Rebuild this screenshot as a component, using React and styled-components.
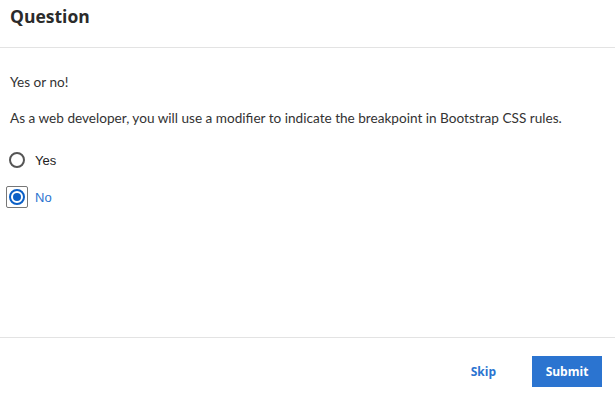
import React, { useState } from "react";
import styled, { createGlobalStyle } from "styled-components";

const Global = createGlobalStyle`
  html, body { margin: 0; padding: 0; background: #fff; }
  body { font-family: Lato, "Noto Sans", sans-serif; }
`;

const Page = styled.div`
  width: 615px;
  height: 404px;
  display: flex;
  flex-direction: column;
  box-sizing: border-box;
`;

const Header = styled.header`
  height: 48px;
  box-sizing: border-box;
  border-bottom: 1px solid #e3e3e3;
  padding: 5px 10px 0;
`;

const Title = styled.h1`
  margin: 0;
  font-family: "Open Sans", sans-serif;
  font-weight: 700;
  font-size: 17.5px;
  line-height: 22px;
  color: #2b2b2b;
`;

const Body = styled.main`
  flex: 1;
  padding: 25px 10px 0;
  border-bottom: 1px solid #e3e3e3;
`;

const Para = styled.p`
  margin: 0 0 18px;
  font-size: 13.6px;
  line-height: 18px;
  color: #333;
`;

const Options = styled.div`
  display: flex;
  flex-direction: column;
  gap: 15px;
  margin-top: 22px;
`;

const Option = styled.label`
  display: flex;
  align-items: center;
  gap: 7px;
  font-family: "Liberation Sans", Arial, sans-serif;
  font-size: 13px;
  color: ${(p) => (p.$checked ? "#2b74d0" : "#222")};
  cursor: pointer;
`;

const RadioWrap = styled.span`
  width: 22px;
  height: 22px;
  display: flex;
  align-items: center;
  justify-content: center;
  box-sizing: border-box;
  margin-left: -4px;
  border-radius: 2px;
  border: 1.5px solid ${(p) => (p.$focus ? "#777" : "transparent")};
`;

const Radio = styled.span`
  width: 16px;
  height: 16px;
  border-radius: 50%;
  box-sizing: border-box;
  border: 2px solid ${(p) => (p.$checked ? "#0b5fc6" : "#555")};
  display: flex;
  align-items: center;
  justify-content: center;
  &::after {
    content: "";
    width: 8px;
    height: 8px;
    border-radius: 50%;
    background: ${(p) => (p.$checked ? "#0b5fc6" : "transparent")};
  }
`;

const Footer = styled.footer`
  height: 66px;
  display: flex;
  align-items: center;
  justify-content: flex-end;
  padding: 0 13px 0 0;
  gap: 36px;
  box-sizing: border-box;
`;

const LinkButton = styled.button`
  border: none;
  background: none;
  font-family: "Open Sans", sans-serif;
  font-weight: 700;
  font-size: 12px;
  color: #2b74d0;
  padding: 0;
  cursor: pointer;
`;

const PrimaryButton = styled.button`
  width: 70px;
  height: 31px;
  border: none;
  background: #2b74d0;
  color: #fff;
  font-family: "Open Sans", sans-serif;
  font-weight: 700;
  font-size: 12px;
  padding: 0;
  cursor: pointer;
`;

export default function App() {
  const [value, setValue] = useState("no");
  const options = [
    { id: "yes", label: "Yes" },
    { id: "no", label: "No" },
  ];
  return (
    <Page>
      <Global />
      <Header>
        <Title>Question</Title>
      </Header>
      <Body>
        <Para>Yes or no!</Para>
        <Para>
          As a web developer, you will use a modifier to indicate the breakpoint in Bootstrap CSS rules.
        </Para>
        <Options>
          {options.map((o) => (
            <Option key={o.id} $checked={value === o.id} onClick={() => setValue(o.id)}>
              <RadioWrap $focus={value === o.id}>
                <Radio $checked={value === o.id} />
              </RadioWrap>
              {o.label}
            </Option>
          ))}
        </Options>
      </Body>
      <Footer>
        <LinkButton>Skip</LinkButton>
        <PrimaryButton>Submit</PrimaryButton>
      </Footer>
    </Page>
  );
}
